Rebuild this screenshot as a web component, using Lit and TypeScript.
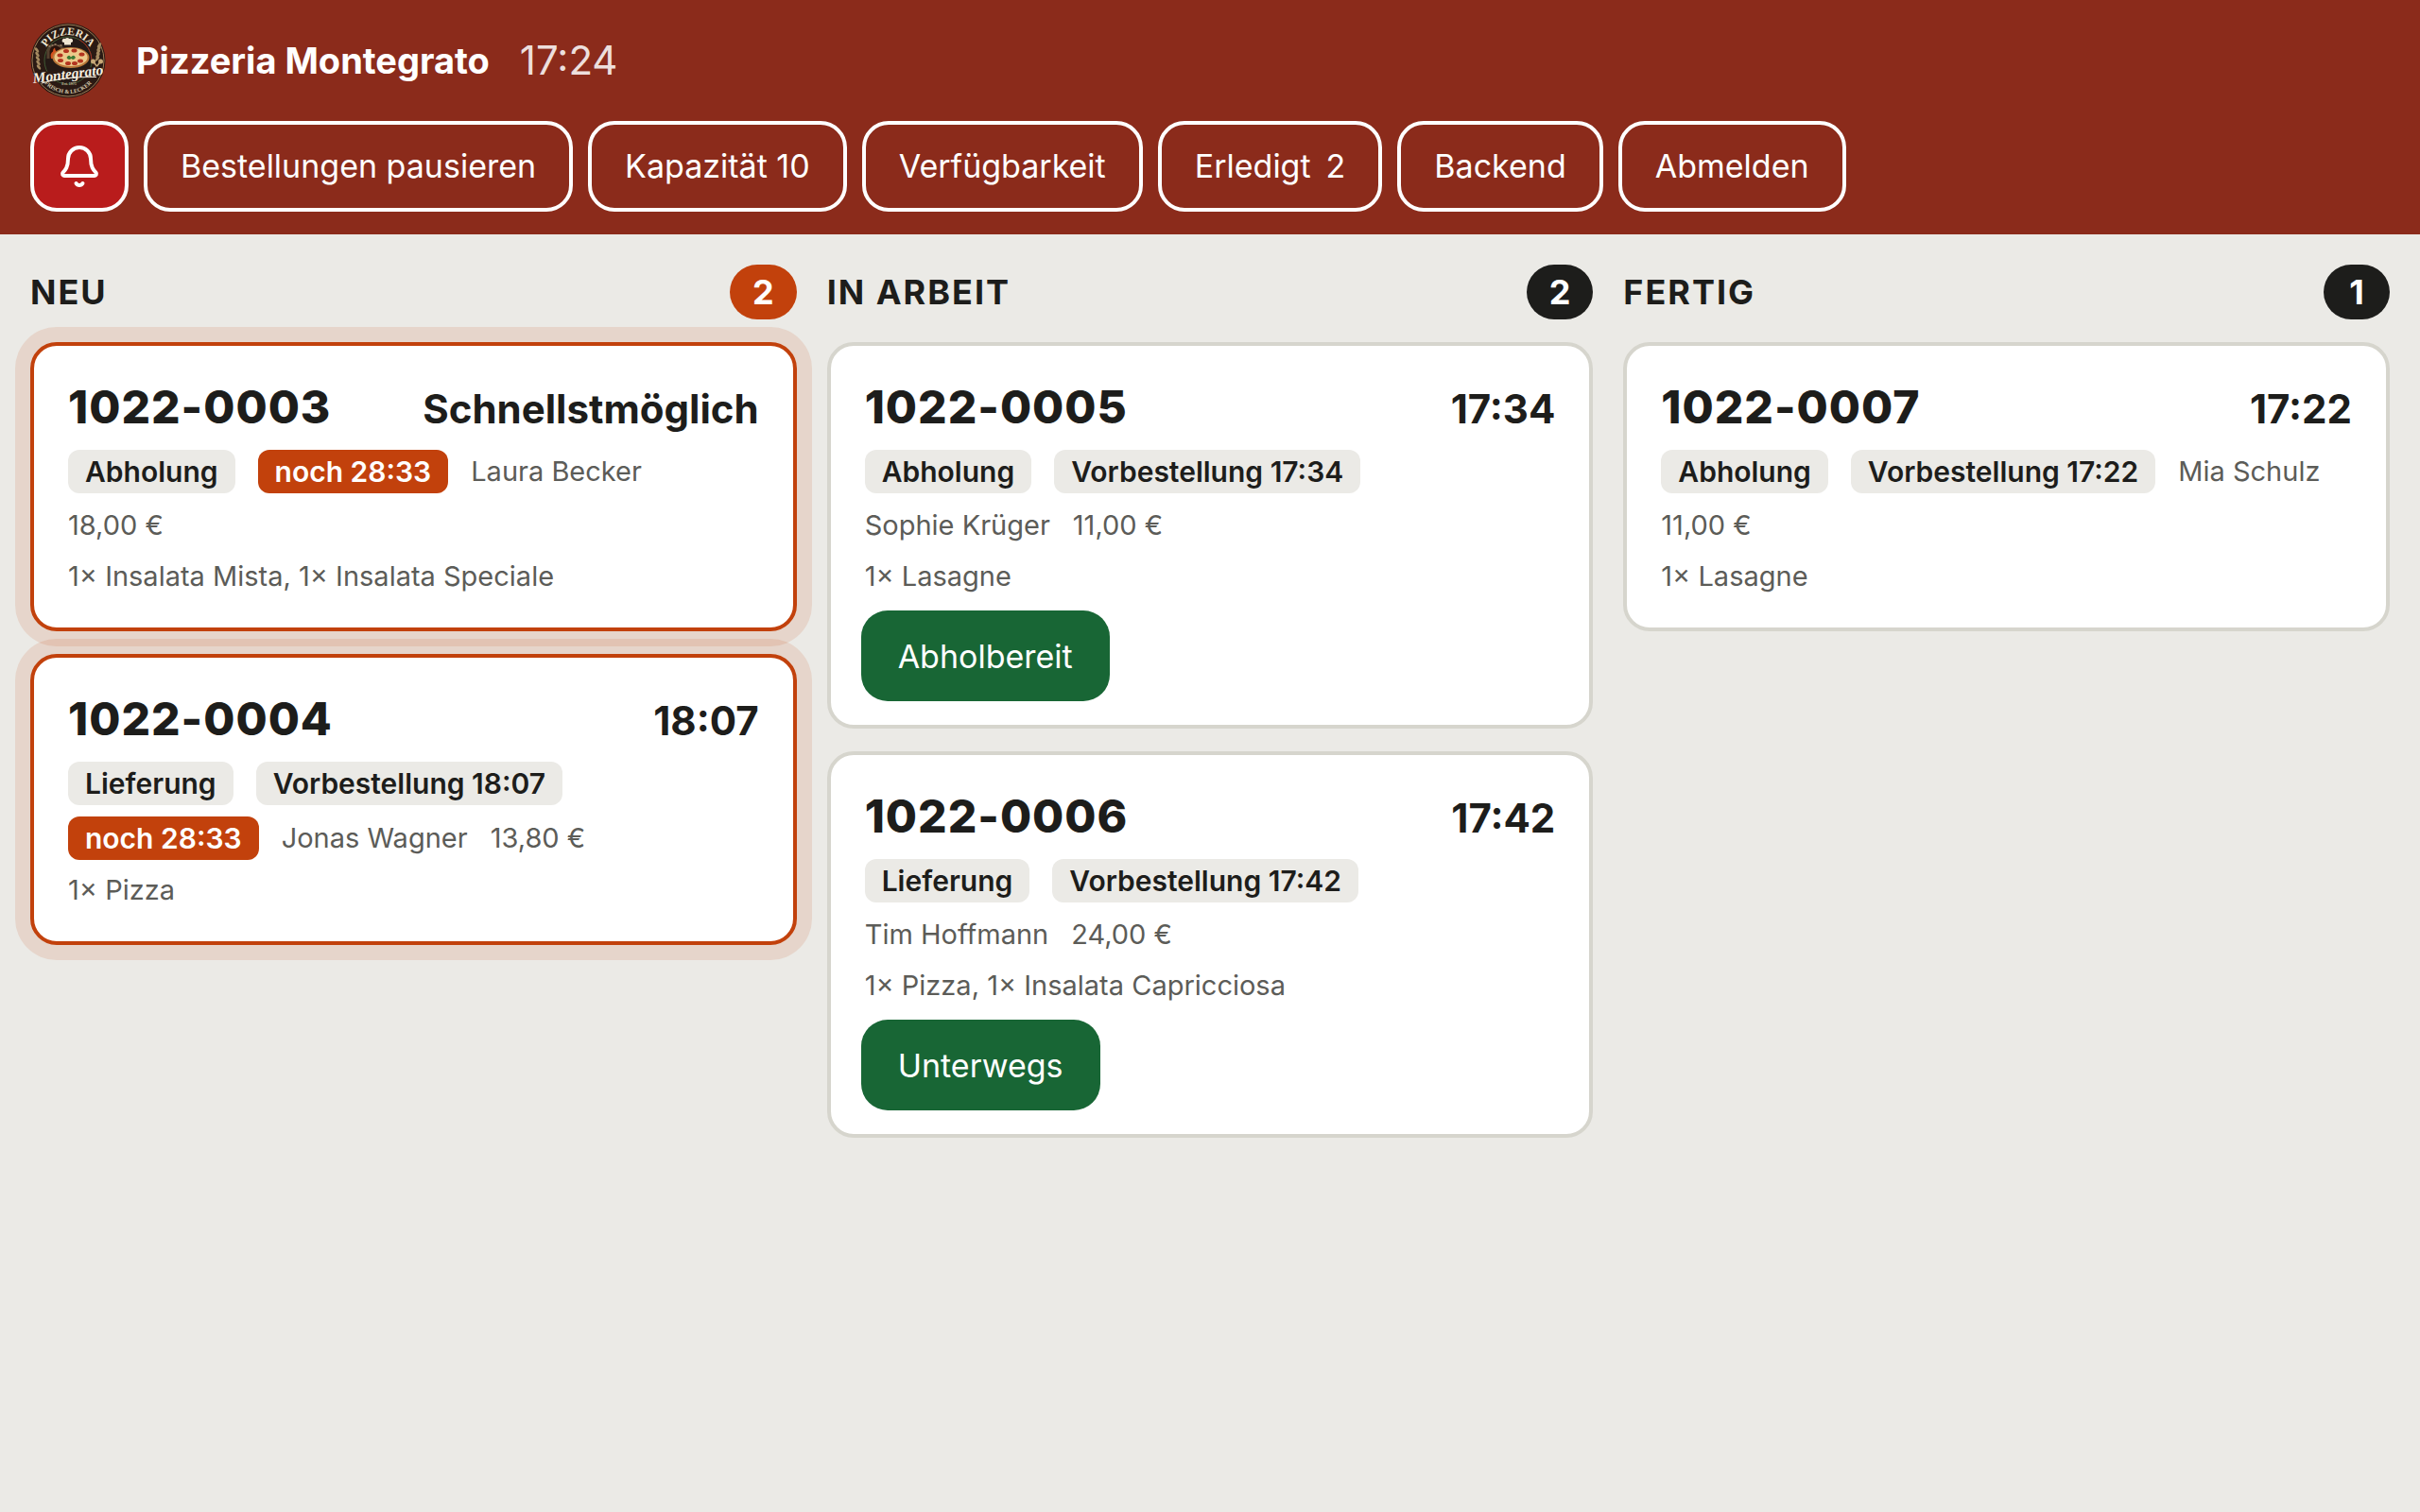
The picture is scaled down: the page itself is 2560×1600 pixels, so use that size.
import { LitElement, html, svg, css, nothing } from "lit";
import { customElement, property } from "lit/decorators.js";

interface Order {
  id: string;
  due: string;
  kind: string;
  preorder?: string;
  countdown?: string;
  customer: string;
  total: string;
  items: string;
  action?: string;
}

interface Column {
  key: string;
  title: string;
  fresh?: boolean;
  orders: Order[];
}

const COLUMNS: Column[] = [
  {
    key: "new",
    title: "Neu",
    fresh: true,
    orders: [
      { id: "1022-0003", due: "Schnellstmöglich", kind: "Abholung", countdown: "noch 28:33", customer: "Laura Becker", total: "18,00 €", items: "1× Insalata Mista, 1× Insalata Speciale" },
      { id: "1022-0004", due: "18:07", kind: "Lieferung", preorder: "Vorbestellung 18:07", countdown: "noch 28:33", customer: "Jonas Wagner", total: "13,80 €", items: "1× Pizza" },
    ],
  },
  {
    key: "progress",
    title: "In Arbeit",
    orders: [
      { id: "1022-0005", due: "17:34", kind: "Abholung", preorder: "Vorbestellung 17:34", customer: "Sophie Krüger", total: "11,00 €", items: "1× Lasagne", action: "Abholbereit" },
      { id: "1022-0006", due: "17:42", kind: "Lieferung", preorder: "Vorbestellung 17:42", customer: "Tim Hoffmann", total: "24,00 €", items: "1× Pizza, 1× Insalata Capricciosa", action: "Unterwegs" },
    ],
  },
  {
    key: "done",
    title: "Fertig",
    orders: [
      { id: "1022-0007", due: "17:22", kind: "Abholung", preorder: "Vorbestellung 17:22", customer: "Mia Schulz", total: "11,00 €", items: "1× Lasagne" },
    ],
  },
];

@customElement("shop-logo")
export class ShopLogo extends LitElement {
  static styles = css`
    :host { display: block; width: 80px; height: 80px; }
    .logo { display: block; width: 100%; height: 100%; }
    .arc { font: 700 23px "Liberation Serif", serif; fill: #efe6d2; }
    .script { font: italic 700 31px "Liberation Serif", serif; fill: #f6efe0; }
    .small { font: 700 12px "Liberation Serif", serif; fill: #d9cdb0; }
    .tiny { font: 700 8px "Liberation Serif", serif; fill: #c9bd9f; }
  `;

  render() {
    const leaves = [0, 1, 2, 3, 4];
    const tiles = [0, 1, 2, 3, 4];
    return html`
      <svg class="logo" viewBox="0 0 160 160" role="img" aria-label="Logo">
        <defs>
          <path id="top" d="M26 80 A54 54 0 0 1 134 80" />
          <path id="bottom" d="M12 82 A68 68 0 0 0 148 82" />
        </defs>
        <circle cx="80" cy="80" r="79" fill="#2a1a14" />
        <circle cx="80" cy="80" r="76" fill="none" stroke="#9c7a54" stroke-width="2" />
        <circle cx="80" cy="80" r="50" fill="#241a16" stroke="#3f5a34" stroke-width="2" />
        <path d="M104 36 A50 50 0 0 1 130 80" fill="none" stroke="#a32a20" stroke-width="2" />
        <path d="M35 76 v-18 a20 18 0 0 1 38 0 v18z" fill="#54402f" />
        ${tiles.map((i) => svg`<path d="M${39 + i * 6} ${48 - (i % 3) * 2} h4 v4 h-4z" fill="#8b725a" />`)}
        <path d="M41 76 v-15 a12 12 0 0 1 25 0 v15z" fill="#2a120b" />
        <path d="M44 76 q-3 -11 4 -15 q0 -6 4 -8 q0 6 5 10 q5 6 2 13z" fill="#d4521e" />
        <path d="M49 76 q-1 -8 4 -11 q4 5 2 11z" fill="#f2a33a" />
        <path d="M72 42 q-7 -1 -4 -6 q2 -4 6 -2 q4 -4 9 0 q6 -2 7 3 q1 4 -4 5 v5 h-14z" fill="#efe6d2" />
        <ellipse cx="86" cy="74" rx="39" ry="22" fill="#b9783a" />
        <ellipse cx="86" cy="73" rx="35" ry="19" fill="#ecc98a" />
        ${[[63, 69], [76, 60], [93, 59], [109, 67], [106, 81], [80, 86], [64, 80], [94, 86]].map(
          ([x, y]) => svg`<ellipse cx=${x} cy=${y} rx="6" ry="4" fill="#b3341f" />`,
        )}
        <path d="M77 74 q5 -8 9 -1 q6 -7 10 1 q-5 7 -9 2 q-6 5 -10 -2z" fill="#3c7a34" />
        ${leaves.map((i) => svg`
          <ellipse cx=${14 + i} cy=${58 + i * 9} rx="3" ry="6" transform="rotate(-35 ${14 + i} ${58 + i * 9})" fill="#a58a60" />
          <ellipse cx=${146 - i} cy=${48 + i * 7} rx="3" ry="6" transform="rotate(35 ${146 - i} ${48 + i * 7})" fill="#a58a60" />
        `)}
        <path d="M133 82 l14 18 M149 82 l-14 18" stroke="#c7a877" stroke-width="3" />
        <circle cx="133" cy="82" r="5" fill="#c7a877" />
        <circle cx="149" cy="82" r="5" fill="#c7a877" />
        <path d="M6 106 L150 92 L146 114 Q80 116 18 128z" fill="#2a1a14" />
        <text class="arc" text-anchor="middle"><textPath href="#top" startOffset="50%">PIZZERIA</textPath></text>
        <text class="script" x="80" y="119" text-anchor="middle" transform="rotate(-7 80 112)">Montegrato</text>
        <path d="M24 128 Q70 114 140 115" fill="none" stroke="#f6efe0" stroke-width="2" />
        <text class="tiny" x="82" y="132" text-anchor="middle">Est. 1975</text>
        <text class="small" text-anchor="middle"><textPath href="#bottom" startOffset="50%">FRISCH &amp; LECKER</textPath></text>
      </svg>
    `;
  }
}

@customElement("order-card")
export class OrderCard extends LitElement {
  @property({ attribute: false }) order!: Order;
  @property({ type: Boolean, reflect: true }) fresh = false;

  static styles = css`
    :host {
      display: block;
      box-sizing: border-box;
      padding: 32px;
      background: #fff;
      border: 4px solid #d6d5cd;
      border-radius: 28px;
      color: #1d1d1b;
    }
    :host([fresh]) {
      border-color: #c2410c;
      box-shadow: 0 0 0 16px rgba(194, 65, 12, 0.12);
    }
    :host([actionable]) { padding-bottom: 25px; }
    .body { display: flex; flex-direction: column; padding: 0 4px; }
    .head { display: flex; align-items: baseline; justify-content: space-between; margin-bottom: 12px; }
    .id { margin: 0; font-size: 48px; font-weight: 800; letter-spacing: 1px; line-height: 66px; }
    .due { font-size: 42px; font-weight: 700; line-height: 48px; }
    .meta { display: flex; flex-wrap: wrap; align-items: center; gap: 12px 24px; margin-bottom: 10px; padding-right: 12px; font-size: 29px; line-height: 44px; color: #5c5c58; }
    .badge { padding: 0 18px; border-radius: 12px; background: #ebeae6; color: #1d1d1b; font-size: 30px; font-weight: 600; line-height: 46px; }
    .urgent { background: #c2410c; color: #fff; }
    .items { margin: 0; font-size: 29px; line-height: 44px; color: #5c5c58; }
    .action { display: block; margin-top: 14px; height: 96px; padding: 0 39px; border: 0; border-radius: 28px; background: #186635; color: #fff; font: 400 34px Inter, "Liberation Sans", sans-serif; cursor: pointer; }
  `;

  render() {
    const o = this.order;
    return html`
      <div class="body">
        <div class="head">
          <h3 class="id">${o.id}</h3>
          <span class="due">${o.due}</span>
        </div>
        <div class="meta">
          <span class="badge">${o.kind}</span>
          ${o.preorder ? html`<span class="badge">${o.preorder}</span>` : nothing}
          ${o.countdown ? html`<span class="badge urgent">${o.countdown}</span>` : nothing}
          <span>${o.customer}</span>
          <span>${o.total}</span>
        </div>
        <p class="items">${o.items}</p>
      </div>
      ${o.action ? html`<button class="action" type="button">${o.action}</button>` : nothing}
    `;
  }
}

@customElement("app-root")
export class AppRoot extends LitElement {
  static styles = css`
    :host { display: block; min-height: 100vh; background: #ebeae6; color: #1d1d1b; font-family: Inter, "Liberation Sans", sans-serif; }
    .top { display: flex; flex-direction: column; gap: 24px; padding: 24px 32px; background: #8b2b1b; color: #fff; }
    .brand { display: flex; align-items: center; gap: 32px; line-height: 48px; }
    .name { margin: 0; font-size: 38px; font-weight: 700; }
    .clock { font-size: 42px; opacity: 0.85; }
    .nav { display: flex; flex-wrap: wrap; gap: 16px; }
    .btn { display: flex; align-items: center; justify-content: center; gap: 16px; box-sizing: border-box; height: 96px; padding: 0 35px 2px; border: 4px solid #fff; border-radius: 28px; background: transparent; color: #fff; font: 400 34px Inter, "Liberation Sans", sans-serif; cursor: pointer; }
    .alarm { width: 104px; padding: 0; background: #b91c1c; }
    .bell { width: 48px; height: 48px; }
    .board { display: grid; grid-template-columns: repeat(3, minmax(0, 1fr)); align-items: start; gap: 32px; padding: 32px; }
    .column { display: flex; flex-direction: column; gap: 24px; }
    .title { display: flex; align-items: center; justify-content: space-between; }
    .label { margin: 0; font-size: 36px; font-weight: 700; line-height: 58px; letter-spacing: 2px; text-transform: uppercase; }
    .count { box-sizing: border-box; min-width: 70px; padding: 0 24px; border-radius: 29px; background: #1d1d1b; color: #fff; font-size: 36px; font-weight: 700; line-height: 58px; text-align: center; }
    .hot { background: #c2410c; }
  `;

  render() {
    return html`
      <header class="top">
        <div class="brand">
          <shop-logo></shop-logo>
          <h1 class="name">Pizzeria Montegrato</h1>
          <time class="clock">17:24</time>
        </div>
        <nav class="nav">
          <button class="btn alarm" type="button" aria-label="Ton">
            <svg class="bell" viewBox="0 0 24 24" fill="none" stroke="currentColor" stroke-width="2" stroke-linecap="round" stroke-linejoin="round" aria-hidden="true">
              <path d="M10.268 21a2 2 0 0 0 3.464 0" />
              <path d="M3.262 15.326A1 1 0 0 0 4 17h16a1 1 0 0 0 .74-1.673C19.41 13.956 18 12.499 18 8A6 6 0 0 0 6 8c0 4.499-1.411 5.956-2.738 7.326" />
            </svg>
          </button>
          <button class="btn" type="button">Bestellungen pausieren</button>
          <button class="btn" type="button">Kapazität 10</button>
          <button class="btn" type="button">Verfügbarkeit</button>
          <button class="btn" type="button"><span>Erledigt</span><span>2</span></button>
          <button class="btn" type="button">Backend</button>
          <button class="btn" type="button">Abmelden</button>
        </nav>
      </header>
      <main class="board">
        ${COLUMNS.map((c) => html`
          <section class="column" aria-labelledby=${c.key}>
            <div class="title">
              <h2 class="label" id=${c.key}>${c.title}</h2>
              <span class="count ${c.fresh ? "hot" : ""}">${c.orders.length}</span>
            </div>
            ${c.orders.map((o) => html`<order-card .order=${o} ?fresh=${!!c.fresh} ?actionable=${!!o.action}></order-card>`)}
          </section>
        `)}
      </main>
    `;
  }
}
